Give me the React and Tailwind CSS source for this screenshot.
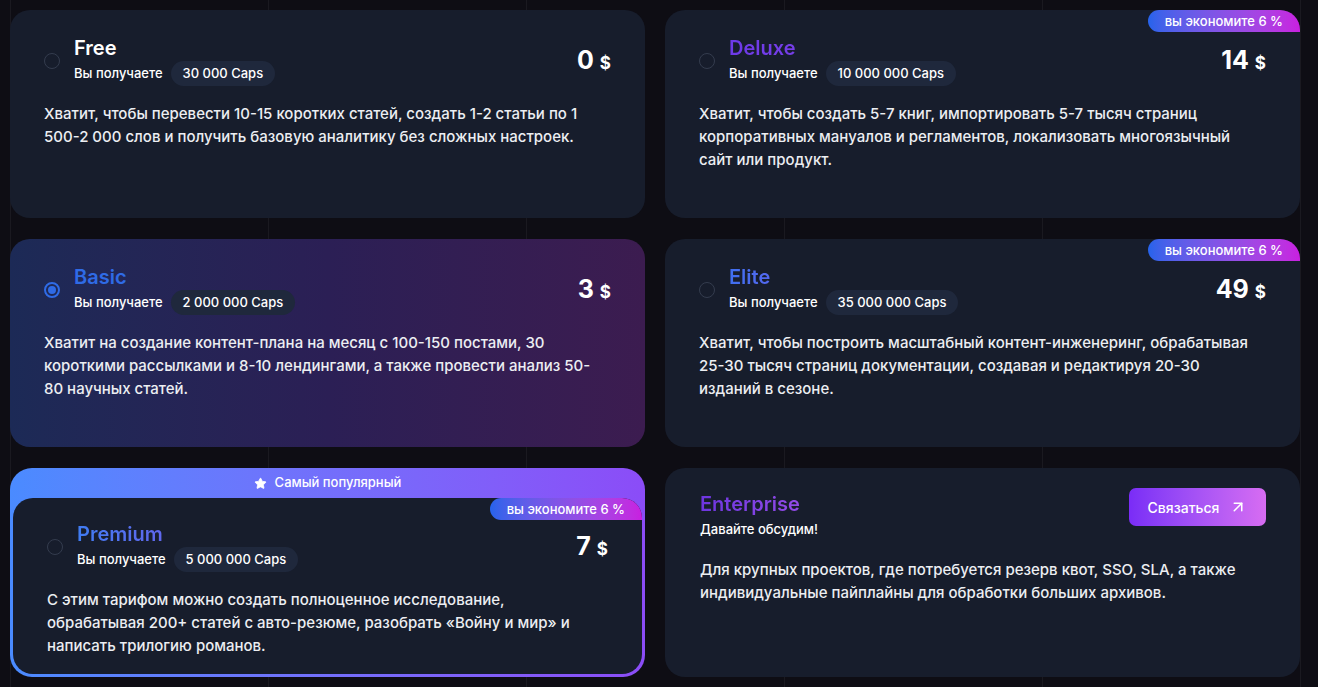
import React from 'react';
import { Star, ArrowUpRight } from 'lucide-react';

const plans = [
    {
        name: 'Free',
        caps: '30 000 Caps',
        price: '0',
        text: 'Хватит, чтобы перевести 10-15 коротких статей, создать 1-2 статьи по 1 500-2 000 слов и получить базовую аналитику без сложных настроек.',
        titleClass: 'text-white',
    },
    {
        name: 'Deluxe',
        caps: '10 000 000 Caps',
        price: '14',
        save: true,
        text: 'Хватит, чтобы создать 5-7 книг, импортировать 5-7 тысяч страниц корпоративных мануалов и регламентов, локализовать многоязычный сайт или продукт.',
        titleClass: 'bg-gradient-to-r from-[#6d3ae8] to-[#8a44e6] bg-clip-text text-transparent',
    },
    {
        name: 'Basic',
        caps: '2 000 000 Caps',
        price: '3',
        active: true,
        text: 'Хватит на создание контент-плана на месяц с 100-150 постами, 30 короткими рассылками и 8-10 лендингами, а также провести анализ 50-80 научных статей.',
        titleClass: 'text-[#2f6be6]',
    },
    {
        name: 'Elite',
        caps: '35 000 000 Caps',
        price: '49',
        save: true,
        text: 'Хватит, чтобы построить масштабный контент-инженеринг, обрабатывая 25-30 тысяч страниц документации, создавая и редактируя 20-30 изданий в сезоне.',
        titleClass: 'bg-gradient-to-r from-[#3f6ff0] to-[#8a3fe6] bg-clip-text text-transparent',
    },
];

const SaveBadge = () => (
    <div className="absolute right-0 top-0 rounded-bl-[12px] rounded-tl-[12px] bg-gradient-to-r from-[#2563eb] to-[#c81fe0] px-[17px] py-[2px] text-[13px] font-medium leading-[18px] text-white">
        вы экономите 6 %
    </div>
);

const Radio = ({ active }) =>
    active ? (
        <span className="flex h-[16px] w-[16px] shrink-0 items-center justify-center rounded-full border-2 border-[#2f6be6]">
            <span className="h-[8px] w-[8px] rounded-full bg-[#2f6be6]" />
        </span>
    ) : (
        <span className="h-[16px] w-[16px] shrink-0 rounded-full border border-[#343c4e]" />
    );

const PlanBody = ({ plan, textWidth }) => (
    <>
        <div className="flex items-center">
            <Radio active={plan.active} />
            <div className="ml-[14px] flex flex-col">
                <span className={`text-[20px] font-semibold leading-[26px] ${plan.titleClass}`}>{plan.name}</span>
                <div className="flex items-center gap-2">
                    <span className="text-[13px] font-medium text-white">Вы получаете</span>
                    <span className="rounded-full bg-[#1f283c] px-3 py-[3px] text-[13px] font-medium leading-[19px] text-white">{plan.caps}</span>
                </div>
            </div>
            <div className="ml-auto flex items-baseline gap-[6px] font-bold text-white">
                <span className="text-[25px]">{plan.price}</span>
                <span className="text-[17px]">$</span>
            </div>
        </div>
        <p className={`mt-[16px] text-[15px] font-medium leading-[23px] text-[#eceef2] ${textWidth}`}>{plan.text}</p>
    </>
);

const PlanCard = ({ plan }) => (
    <div
        className={`relative h-[208px] overflow-hidden rounded-[20px] pl-[34px] pr-[34px] pt-[25px] ${
            plan.active ? 'bg-gradient-to-r from-[#1c2a56] via-[#2b1f55] to-[#3c1c50]' : 'bg-[#171d2c]'
        }`}
    >
        {plan.save && <SaveBadge />}
        <PlanBody plan={plan} textWidth="max-w-[563px]" />
    </div>
);

const App = () => {
    const premium = {
        name: 'Premium',
        caps: '5 000 000 Caps',
        price: '7',
        text: 'С этим тарифом можно создать полноценное исследование, обрабатывая 200+ статей с авто-резюме, разобрать «Войну и мир» и написать трилогию романов.',
        titleClass: 'bg-gradient-to-r from-[#3f7cf2] to-[#7b3fe6] bg-clip-text text-transparent',
    };

    return (
        <div
            className="min-h-screen bg-[#0e0d14] bg-[linear-gradient(to_right,rgba(255,255,255,0.05)_1px,transparent_1px)] bg-[size:258px_100%] bg-[position:10px_0] pt-[10px] pl-[10px]"
            style={{ fontFamily: 'Inter, "Noto Sans", sans-serif' }}
        >
            <div className="grid w-[1290px] grid-cols-2 gap-x-5 gap-y-[21px]">
                {plans.map((p) => (
                    <PlanCard key={p.name} plan={p} />
                ))}

                {/* popular */}
                <div className="flex h-[209px] flex-col rounded-[22px] bg-gradient-to-r from-[#4a8bff] to-[#8b4cf7] p-[3px] pt-0">
                    <div className="flex h-[30px] items-center justify-center gap-2 text-[13px] font-medium text-white">
                        <Star size={13} fill="white" strokeWidth={1.5} />
                        Самый популярный
                    </div>
                    <div className="relative flex-1 overflow-hidden rounded-[20px] bg-[#171d2c] pl-[34px] pr-[34px] pt-[23px]">
                        <SaveBadge />
                        <PlanBody plan={premium} textWidth="max-w-[557px]" />
                    </div>
                </div>

                {/* enterprise */}
                <div className="h-[209px] rounded-[20px] bg-[#171d2c] pl-[35px] pr-[34px] pt-[20px]">
                    <div className="flex items-start justify-between">
                        <div className="pt-[2px]">
                            <div className="bg-gradient-to-r from-[#6d35e0] to-[#9a4ee8] bg-clip-text text-[20px] font-semibold leading-[28px] text-transparent">
                                Enterprise
                            </div>
                            <div className="mt-[2px] text-[13px] font-medium text-white">Давайте обсудим!</div>
                        </div>
                        <button className="flex h-[38px] w-[137px] items-center justify-center gap-[10px] rounded-[7px] bg-gradient-to-r from-[#7a2cf6] to-[#d76cf2] text-[14px] font-medium text-white">
                            Связаться
                            <ArrowUpRight size={18} strokeWidth={2} />
                        </button>
                    </div>
                    <p className="mt-[18px] text-[15px] font-medium leading-[23px] text-[#eceef2]">
                        Для крупных проектов, где потребуется резерв квот, SSO, SLA, а также индивидуальные пайплайны для обработки больших архивов.
                    </p>
                </div>
            </div>
        </div>
    );
};

export default App;
